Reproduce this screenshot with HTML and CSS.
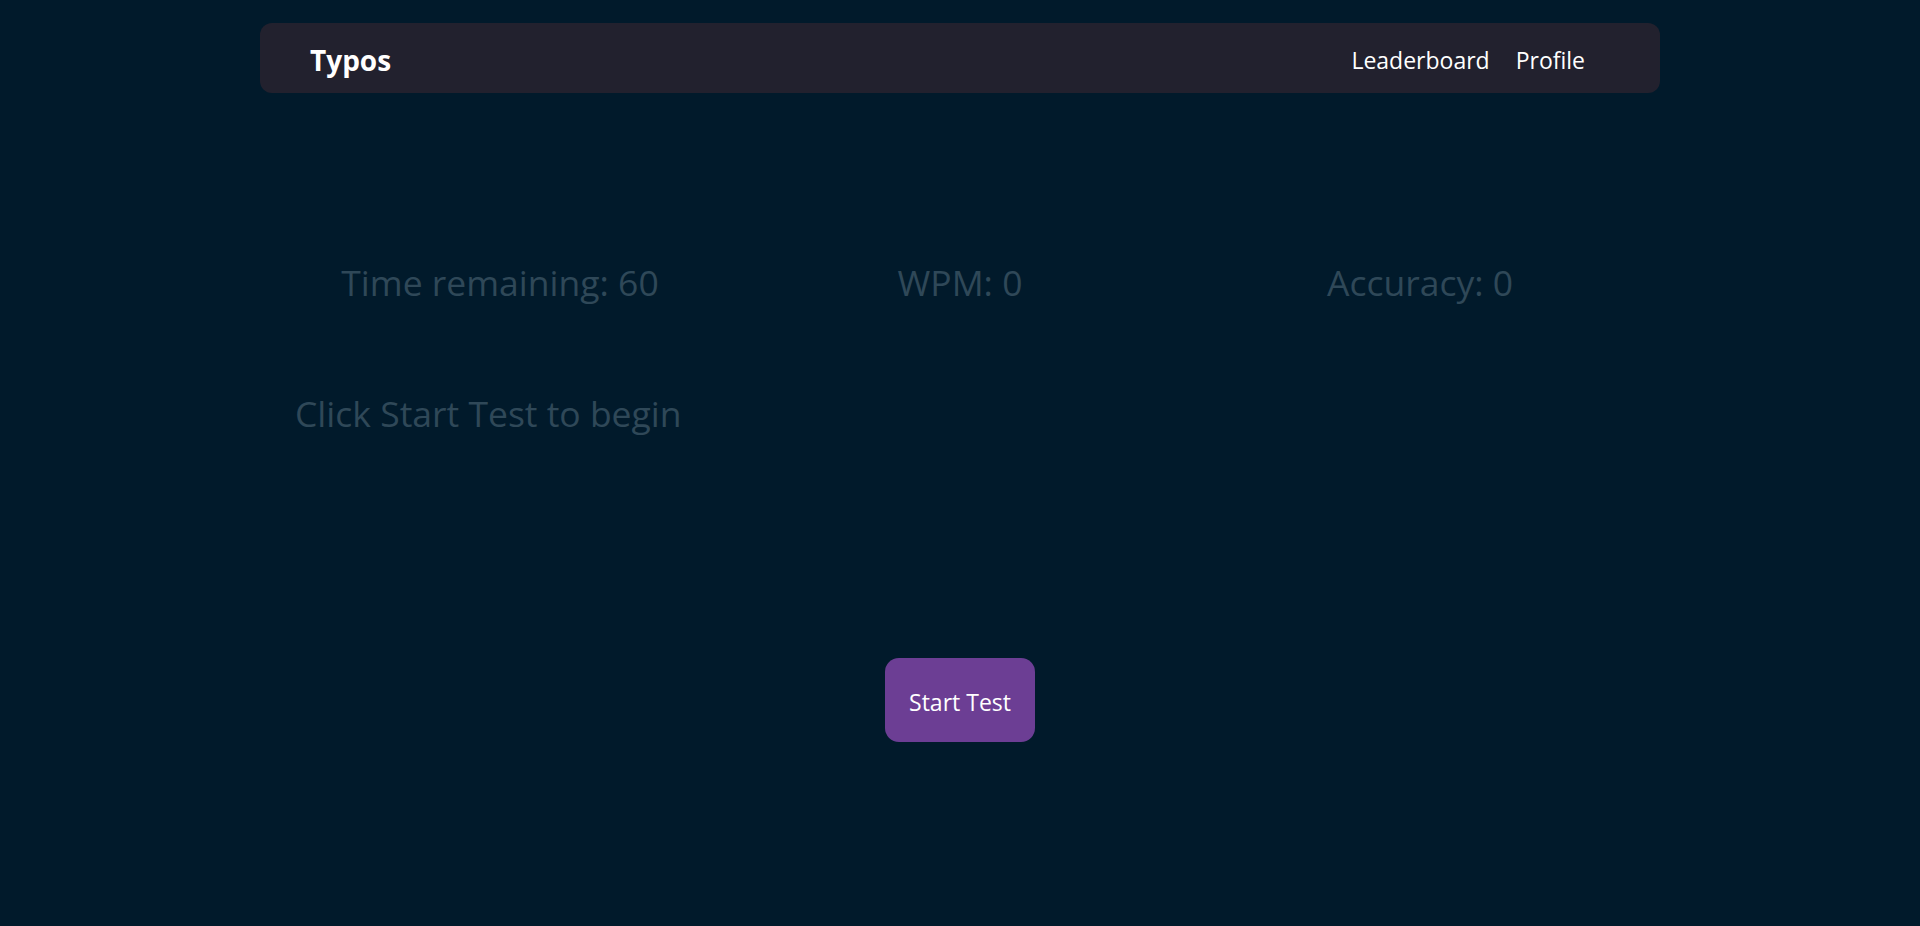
FILE: index.html
```html
<!DOCTYPE html>
<html lang="en">
<head>
<meta charset="utf-8">
<title>Typos</title>
<link rel="stylesheet" href="styles.css">
</head>
<body>
<nav class="navbar">
  <div class="brand">Typos</div>
  <div class="links">
    <a class="link" href="#">Leaderboard</a>
    <a class="link" href="#">Profile</a>
  </div>
</nav>
<main class="main">
  <div class="stats">
    <div class="stat">Time remaining: 60</div>
    <div class="stat">WPM: 0</div>
    <div class="stat">Accuracy: 0</div>
  </div>
  <div class="prompt">Click Start Test to begin</div>
  <div class="actions">
    <button class="start">Start Test</button>
  </div>
</main>
</body>
</html>
```
FILE: styles.css
```css
html, body {
  margin: 0;
  padding: 0;
  background: #011a2b;
  font-family: "Open Sans", "Noto Sans", sans-serif;
  height: 100%;
}
.navbar {
  width: 1400px;
  height: 70px;
  margin: 23px auto 0;
  box-sizing: border-box;
  background: #22212e;
  border-radius: 12px;
  display: flex;
  align-items: center;
  justify-content: space-between;
  padding: 0 75px 0 50px;
}
.brand {
  color: #ffffff;
  font-weight: 700;
  font-size: 28px;
  line-height: 1;
  padding-top: 3px;
}
.links {
  display: flex;
  gap: 26px;
  padding-top: 5px;
}
.link {
  color: #ffffff;
  text-decoration: none;
  font-size: 23px;
  line-height: 1;
}
.main {
  width: 1380px;
  margin: 0 auto;
}
.stats {
  display: grid;
  grid-template-columns: repeat(3, 1fr);
  margin-top: 165px;
}
.stat {
  text-align: center;
  color: #2f4858;
  font-size: 35.5px;
  line-height: 48px;
}
.prompt {
  color: #2f4858;
  font-size: 35.5px;
  line-height: 48px;
  margin-top: 83px;
  padding-left: 25px;
}
.actions {
  display: flex;
  justify-content: center;
  margin-top: 221px;
}
.start {
  width: 150px;
  height: 84px;
  border: none;
  border-radius: 14px;
  background: #6c3e94;
  color: #ffffff;
  font-family: inherit;
  font-size: 23px;
  padding: 4px 0 0;
}
```
